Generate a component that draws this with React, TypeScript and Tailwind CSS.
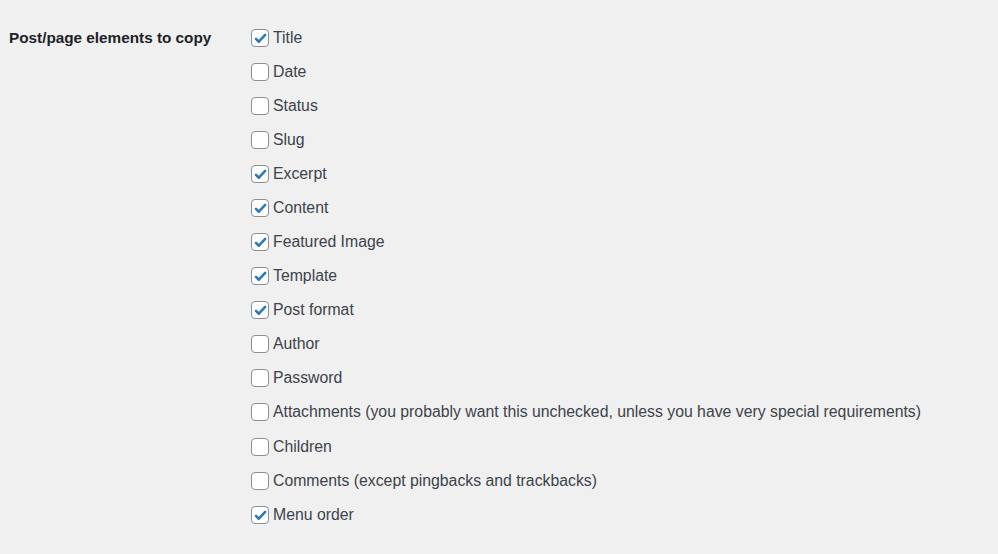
const items = [
  { label: "Title", checked: true },
  { label: "Date", checked: false },
  { label: "Status", checked: false },
  { label: "Slug", checked: false },
  { label: "Excerpt", checked: true },
  { label: "Content", checked: true },
  { label: "Featured Image", checked: true },
  { label: "Template", checked: true },
  { label: "Post format", checked: true },
  { label: "Author", checked: false },
  { label: "Password", checked: false },
  {
    label:
      "Attachments (you probably want this unchecked, unless you have very special requirements)",
    checked: false,
  },
  { label: "Children", checked: false },
  { label: "Comments (except pingbacks and trackbacks)", checked: false },
  { label: "Menu order", checked: true },
];

function Checkbox({ checked }: { checked: boolean }) {
  return (
    <span className="w-[18px] h-[18px] shrink-0 rounded-[4px] border border-[#8c8f94] bg-white flex items-center justify-center">
      {checked && (
        <svg width="15" height="15" viewBox="0 0 20 20">
          <path
            d="M4 10.5l3.8 3.8L16.2 5.2"
            fill="none"
            stroke="#2a7bb3"
            strokeWidth="3.4"
            strokeLinecap="round"
            strokeLinejoin="round"
          />
        </svg>
      )}
    </span>
  );
}

export default function App() {
  return (
    <div
      className="w-[998px] h-[554px] bg-[#f0f0f1] text-[#3c434a] flex pt-[21px]"
      style={{ fontFamily: '"Liberation Sans", Arial, sans-serif' }}
    >
      <div className="w-[251px] pl-[9px] shrink-0">
        <div className="h-[34px] flex items-center text-[15.3px] font-bold text-[#1d2327]">
          Post/page elements to copy
        </div>
      </div>
      <div className="flex flex-col">
        {items.map((item, i) => (
          <label
            key={item.label}
            className={
              i === 11
                ? "h-[35px] flex items-center gap-[4px] text-[15.8px] pb-[1px]"
                : "h-[34px] flex items-center gap-[4px] text-[15.8px]"
            }
          >
            <Checkbox checked={item.checked} />
            <span>{item.label}</span>
          </label>
        ))}
      </div>
    </div>
  );
}
